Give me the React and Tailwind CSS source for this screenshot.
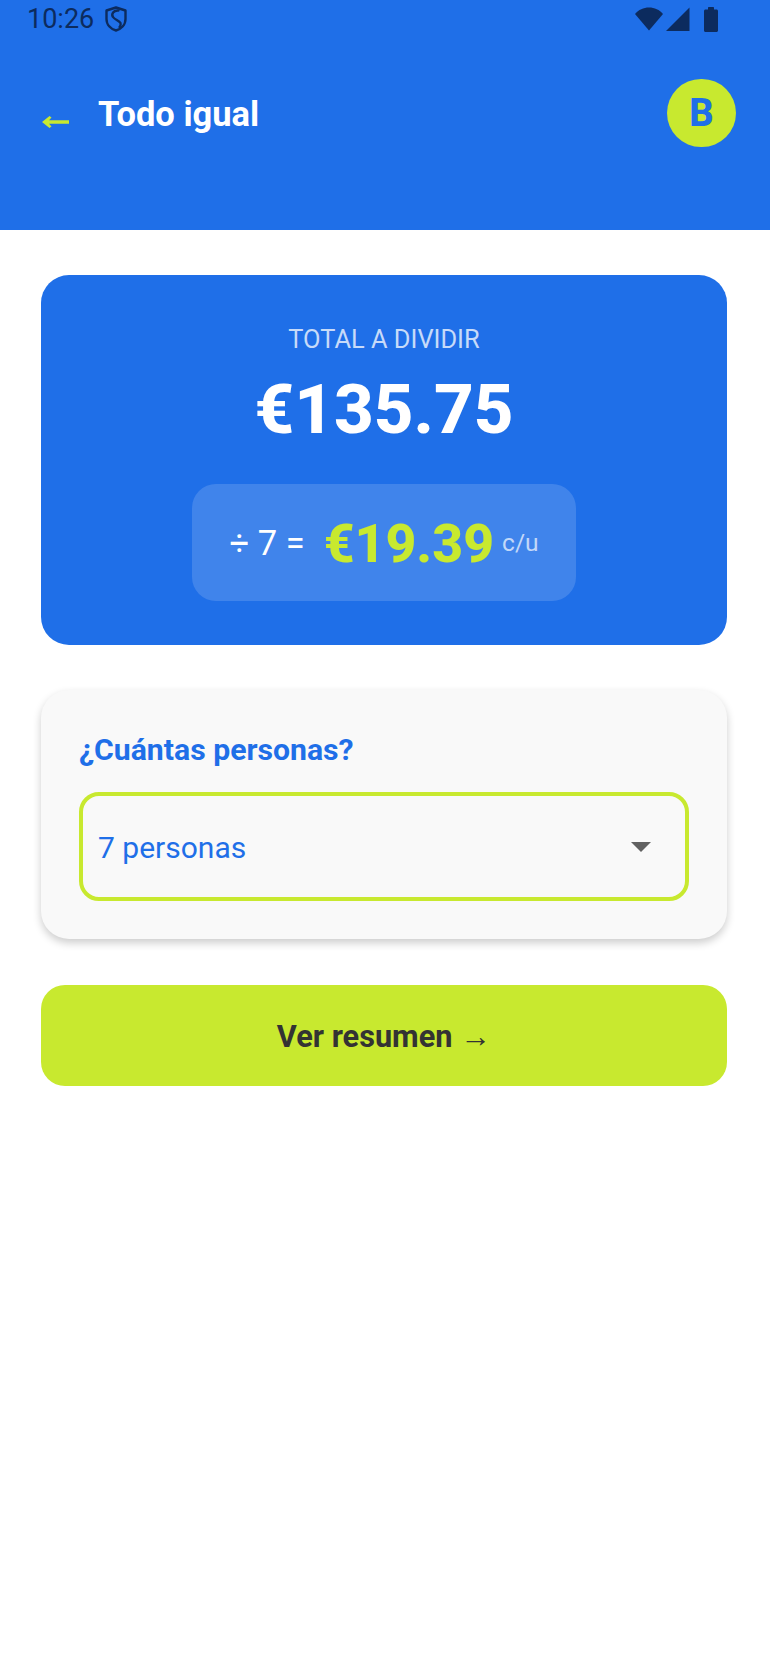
export default function App() {
  return (
    <div className="min-h-[1674px] bg-white font-['Roboto',sans-serif]">
      <header className="h-[230px] bg-[#1f6fe8] pt-[1px]">
        <div className="flex h-[36px] items-center pl-[27px] pr-[52px] text-[#0c2b5e]">
          <span className="text-[27px] leading-[36px]">10:26</span>
          <svg className="ml-[11px]" width="22" height="26" viewBox="0 0 22 26" fill="none" stroke="currentColor" strokeWidth="2.4" strokeLinejoin="round" strokeLinecap="round">
            <path d="M11 1.5 L20.5 4.5 V13 C20.5 19 16 23 11 24.5 C6 23 1.5 19 1.5 13 V4.5 Z" />
            <path d="M13.5 4.5 C8.5 4 6 8 8 11 C9.5 13.5 14 14.5 15.5 17 C16 18.5 15.5 20 14.5 21" />
          </svg>
          <div className="ml-auto flex items-center">
            <svg width="28" height="24" viewBox="0 0 28 24" fill="currentColor"><path d="M14 23.5 L0 7 C3.5 2.8 8.5 0.5 14 0.5 C19.5 0.5 24.5 2.8 28 7 Z" /></svg>
            <svg className="ml-[3px]" width="24" height="24" viewBox="0 0 24 24" fill="currentColor"><path d="M23.5 0.5 V24 H0 Z" /></svg>
            <svg className="ml-[14px]" width="14" height="25" viewBox="0 0 14 25" fill="currentColor"><path d="M4 2.5 V1 C4 .4 4.4 0 5 0 H9 C9.6 0 10 .4 10 1 V2.5 H12.5 C13.3 2.5 14 3.2 14 4 V23.5 C14 24.3 13.3 25 12.5 25 H1.5 C.7 25 0 24.3 0 23.5 V4 C0 3.2 .7 2.5 1.5 2.5 Z" /></svg>
          </div>
        </div>
        <div className="mt-[42px] flex items-start pl-[42px] pr-[34px]">
          <svg className="mt-[37px] mr-[29px]" width="27" height="12" viewBox="0 0 27 12" fill="#c8e92f"><path d="M7.5 0 L9.5 1.5 L7 4.2 H27 V7.8 H7 L9.5 10.5 L7.5 12 L0 6 Z" /></svg>
          <h1 className="mt-[9px] text-[34.5px] font-bold leading-[52px] text-white">Todo igual</h1>
          <div className="ml-auto flex h-[68px] w-[69px] items-center justify-center rounded-full bg-[#c8e92f] text-[38px] font-extrabold text-[#1f6fe8]">B</div>
        </div>
      </header>

      <main className="flex flex-col gap-[45px] pl-[41px] pr-[43px] pt-[45px]">
        <section className="flex h-[370px] flex-col items-center rounded-[28px] bg-[#1f6fe8] pt-[48px]">
          <p className="text-[25.4px] leading-[32px] text-white/75">TOTAL A DIVIDIR</p>
          <p className="mt-[13px] text-[69px] font-extrabold leading-[84px] text-white">€135.75</p>
          <div className="mt-[32px] flex h-[117px] w-[384px] items-center justify-center rounded-[24px] bg-white/15 pt-[2px]">
            <span className="text-[34.5px] text-white">÷ 7 =</span>
            <span className="ml-[19px] text-[53.6px] font-extrabold leading-[64px] text-[#c8e92f]">€19.39</span>
            <span className="ml-[8px] text-[24.5px] text-white/70">c/u</span>
          </div>
        </section>

        <section className="flex h-[249px] flex-col rounded-[28px] bg-[#f9f9f9] px-[38px] pt-[42px] shadow-[0_4px_8px_rgba(0,0,0,0.2)]">
          <p className="text-[30.2px] font-bold leading-[36px] text-[#1f6fe8]">¿Cuántas personas?</p>
          <div className="mt-[24px] flex h-[109px] items-center justify-between rounded-[20px] border-[4px] border-[#c8e92f] pl-[15px] pr-[34px]">
            <span className="pt-[2px] text-[30px] text-[#1f6fe8]">7 personas</span>
            <svg width="20" height="10" viewBox="0 0 20 10" fill="#616161"><path d="M0 0 H20 L10 10 Z" /></svg>
          </div>
        </section>

        <button className="mt-px flex h-[101px] items-center justify-center gap-[8px] rounded-[24px] bg-[#c8e92f] pt-[4px] text-[30.7px] font-bold text-[#333333]"><span>Ver resumen</span><span>→</span></button>
      </main>
    </div>
  );
}
